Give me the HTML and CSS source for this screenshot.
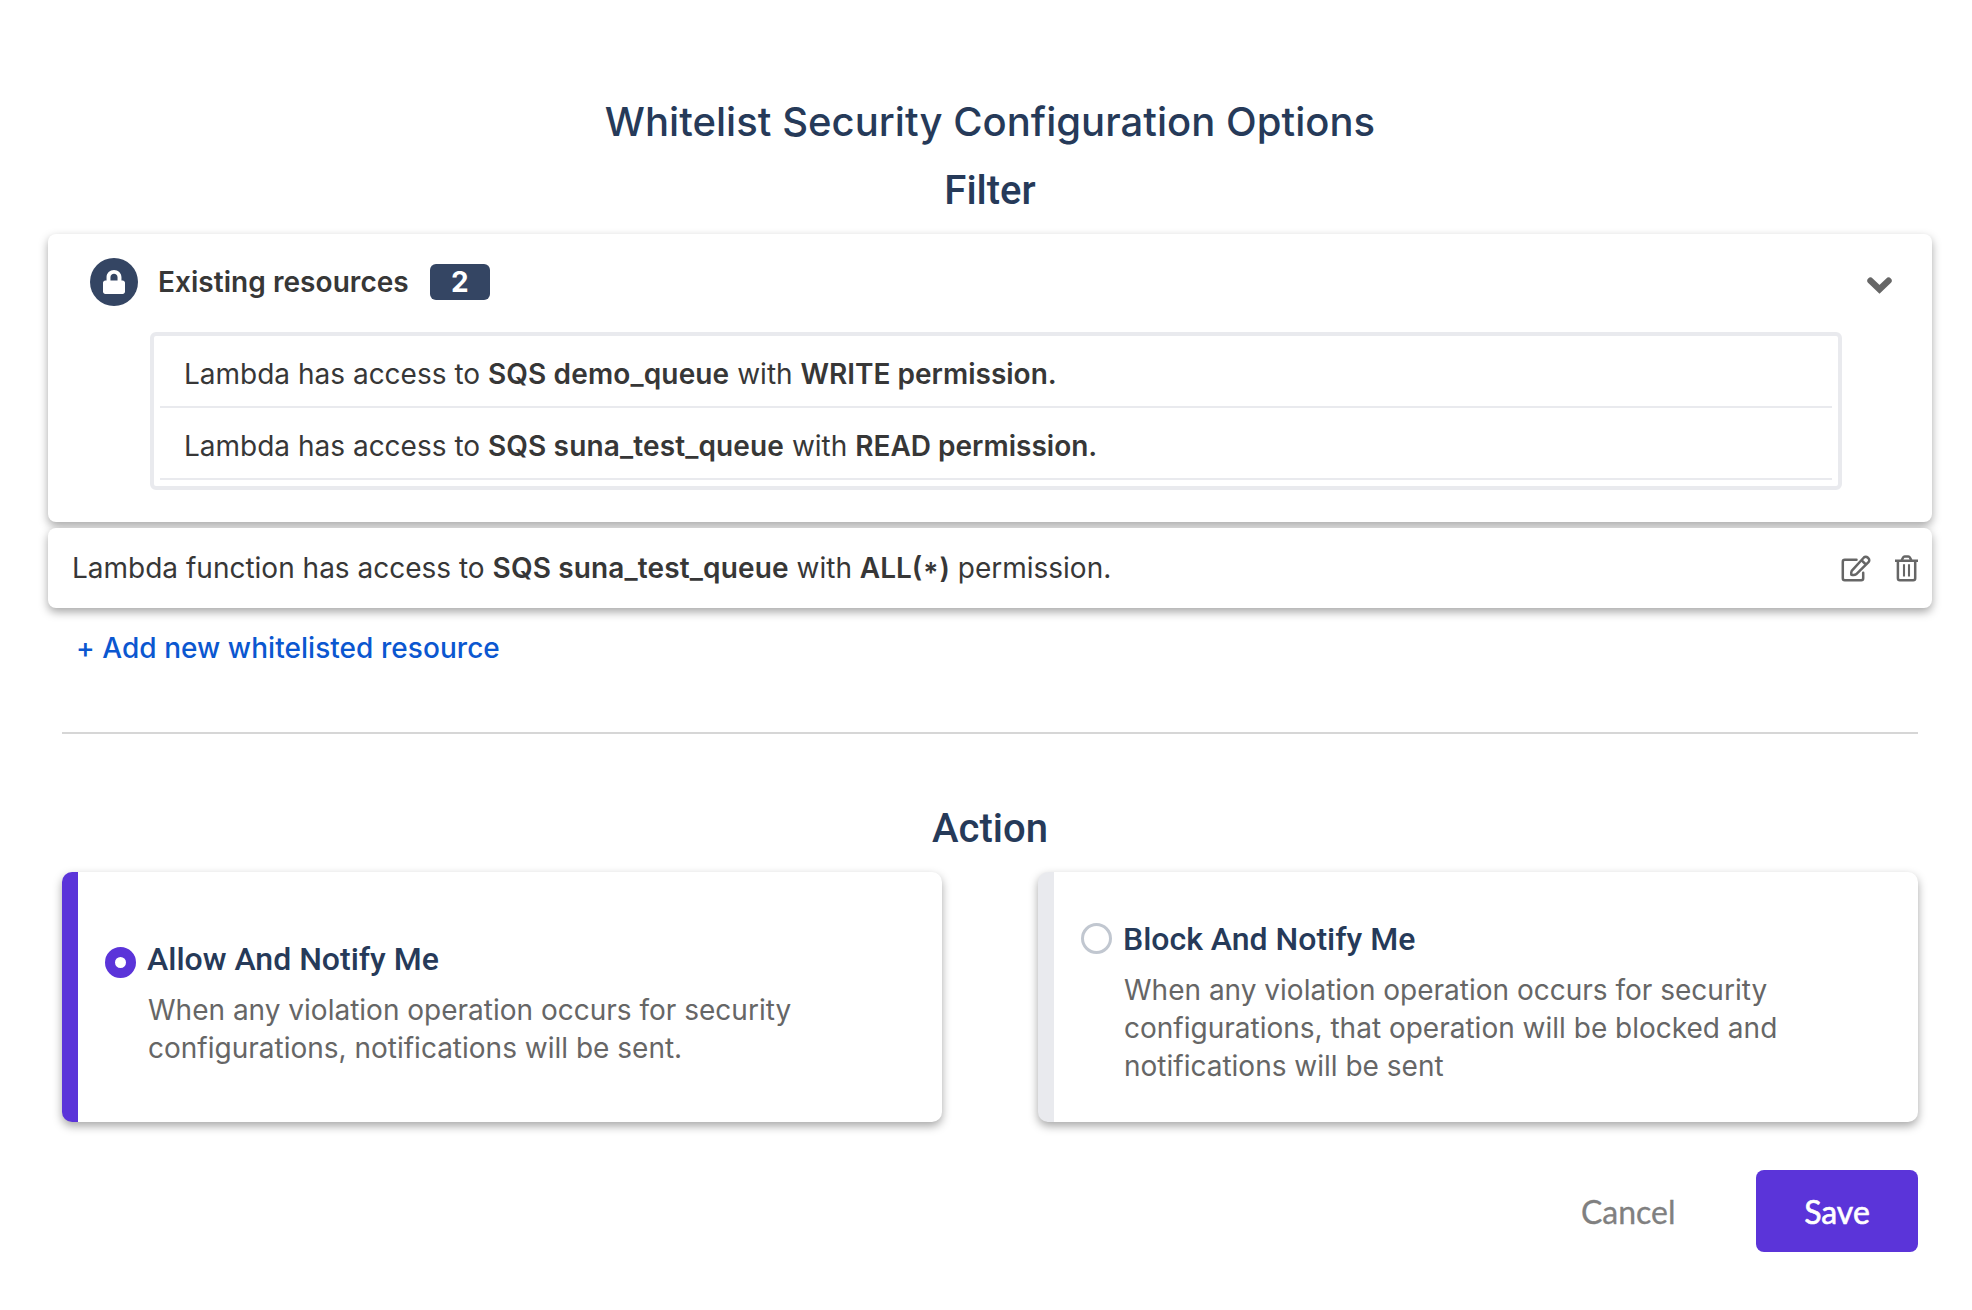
FILE: index.html
```html
<!DOCTYPE html>
<html lang="en">
<head>
<meta charset="utf-8">
<title>Whitelist Security Configuration</title>
<link rel="stylesheet" href="styles.css">
</head>
<body>
<main class="page">
  <h1 class="title">Whitelist Security Configuration Options</h1>
  <h2 class="section-title filter-title">Filter</h2>

  <section class="card existing">
    <header class="existing-head">
      <span class="lock"><svg viewBox="0 0 448 512" width="22" height="24" preserveAspectRatio="none"><path fill="#fff" d="M400 224h-24v-72C376 68 308 0 224 0S72 68 72 152v72H48c-26 0-48 22-48 48v192c0 26 22 48 48 48h352c26 0 48-22 48-48V272c0-26-22-48-48-48zm-104 0H152v-72c0-40 32-72 72-72s72 32 72 72z"/></svg></span>
      <span class="existing-label">Existing resources</span>
      <span class="badge">2</span>
      <svg class="chevron" viewBox="0 0 25 17" width="25" height="17"><path d="M3.500 3.700l9 8.600 9-8.600" fill="none" stroke="#666" stroke-width="6.400" stroke-linecap="round"/></svg>
    </header>
    <ul class="resources">
      <li>Lambda has access to <b>SQS demo_queue</b> with <b>WRITE permission.</b></li>
      <li>Lambda has access to <b>SQS suna_test_queue</b> with <b>READ permission.</b></li>
    </ul>
  </section>

  <section class="card rule">
    <p>Lambda function has access to <b>SQS suna_test_queue</b> with <b>ALL(<span class="star">*</span>)</b> permission.</p>
    <svg class="edit" viewBox="0 0 30 27" width="30" height="27" fill="none" stroke="#666" stroke-width="2.500" stroke-linejoin="round" stroke-linecap="round"><path d="M15.500 4.800H3.800a2 2 0 0 0-2 2v16.400a2 2 0 0 0 2 2h16.400a2 2 0 0 0 2-2v-5.400"/><path d="M10.300 19.700q-.3-2.800.4-3.900L22.900 2.500a2.600 2.600 0 0 1 3.700 0l.9.900a2.600 2.600 0 0 1 0 3.700L15.100 19.300q-1.500 1.100-4.800.4zM20.500 5.200l4.300 4.300"/></svg>
    <svg class="trash" viewBox="0 0 23 27" width="23" height="27" fill="none" stroke="#666" stroke-width="2.500"><path d="M0 5.700h23M2.900 6v17.200a2 2 0 0 0 2 2h13.300a2 2 0 0 0 2-2V6M6.500 5.500l1.600-3q.5-.9 1.500-.9h3.800q1 0 1.500.9l1.600 3"/><path stroke-width="2.100" d="M9 9.300v12.300M14 9.300v12.300"/></svg>
  </section>

  <a class="add">+ Add new whitelisted resource</a>
  <hr class="divider">

  <h2 class="section-title action-title">Action</h2>
  <div class="actions">
    <label class="card option selected">
      <span class="radio"></span>
      <span class="option-text">
        <strong>Allow And Notify Me</strong>
        <span class="desc">When any violation operation occurs for security<br>configurations, notifications will be sent.</span>
      </span>
    </label>
    <label class="card option">
      <span class="radio"></span>
      <span class="option-text">
        <strong>Block And Notify Me</strong>
        <span class="desc">When any violation operation occurs for security<br>configurations, that operation will be blocked and<br>notifications will be sent</span>
      </span>
    </label>
  </div>

  <footer class="buttons">
    <button class="cancel">Cancel</button>
    <button class="save">Save</button>
  </footer>
</main>
</body>
</html>
```
FILE: styles.css
```css
* { box-sizing: border-box; }
body { margin: 0; background: #fff; color: #373737; font-family: Inter, sans-serif; font-size: 28px; }
h1, h2, p, ul { margin: 0; padding: 0; }
.page { width: 1884px; margin-left: 48px; padding-top: 92px; }
.title { height: 60px; line-height: 60px; font-size: 40px; font-weight: 500; letter-spacing: .04px; color: #263a59; text-align: center; }
.section-title { height: 60px; line-height: 60px; font-family: Roboto, sans-serif; font-size: 40px; font-weight: 500; color: #263a59; text-align: center; }
.filter-title { margin: 9px 0 13px; }
.card { background: #fff; border-radius: 8px; box-shadow: 0 4px 10px rgba(0, 0, 0, .35); }
.existing { height: 288px; padding: 24px 40px 0 42px; }
.existing-head { display: flex; align-items: center; height: 48px; }
.lock { display: flex; align-items: center; justify-content: center; width: 48px; height: 48px; border-radius: 50%; background: #344563; }
.existing-label { margin-left: 20px; font-weight: 600; letter-spacing: .05px; }
.badge { width: 60px; height: 36px; margin-left: 21px; border-radius: 6px; background: #344563; color: #fff; font-weight: 700; line-height: 36px; text-align: center; }
.chevron { margin: 6px 0 0 auto; }
.resources { margin: 26px 50px 0 60px; padding: 0 6px 6px; border: 4px solid #e9eaee; border-radius: 6px; list-style: none; }
.resources li { height: 72px; padding-left: 24px; border-bottom: 2px solid #e9eaee; line-height: 76px; }
b { font-weight: 600; }
b:first-of-type { letter-spacing: .14px; }
.star { margin: 0 1px; line-height: 0; vertical-align: -5px; }
.rule { display: flex; align-items: center; height: 80px; margin-top: 6px; padding: 0 14px 0 24px; }
.edit { margin-left: auto; }
.trash { margin-left: 24px; }
.add { display: block; width: max-content; margin: 18px 0 0 28px; height: 44px; line-height: 44px; color: #0b57d0; font-weight: 500; letter-spacing: .05px; }
.divider { height: 2px; margin: 62px 14px 0; border: 0; background: #d6d6d6; }
.action-title { margin: 65px 0 13px; }
.actions { display: grid; grid-template-columns: 880px 880px; gap: 96px; margin: 0 14px; }
.option { display: flex; align-items: flex-start; height: 250px; padding: 47px 0 0 27px; border-left: 16px solid #e9eaee; border-radius: 10px; }
.option.selected { padding-top: 67px; border-left-color: #5b34d9; }
.radio { width: 31px; height: 31px; margin-top: 3.500px; border: 3px solid #c1c7d0; border-radius: 50%; }
.selected .radio { margin-top: 7.500px; border: 10px solid #5b34d9; }
.option-text { margin-left: 11px; }
.option-text strong { display: block; font: 500 32px/40px Roboto, sans-serif; color: #263a59; }
.desc { display: block; margin: 12px 0 0 1px; line-height: 38px; color: #666; }
.buttons { display: flex; justify-content: flex-end; margin: 48px 14px 0; }
.buttons button { height: 82px; border: 0; border-radius: 8px; background: none; font: 400 32px Lato, sans-serif; color: #808080; }
.buttons .cancel { padding: 0 80.500px; -webkit-text-stroke: .3px #808080; }
.buttons .save { width: 162px; background: #5b34d9; color: #fff; -webkit-text-stroke: .6px #fff; }
```
